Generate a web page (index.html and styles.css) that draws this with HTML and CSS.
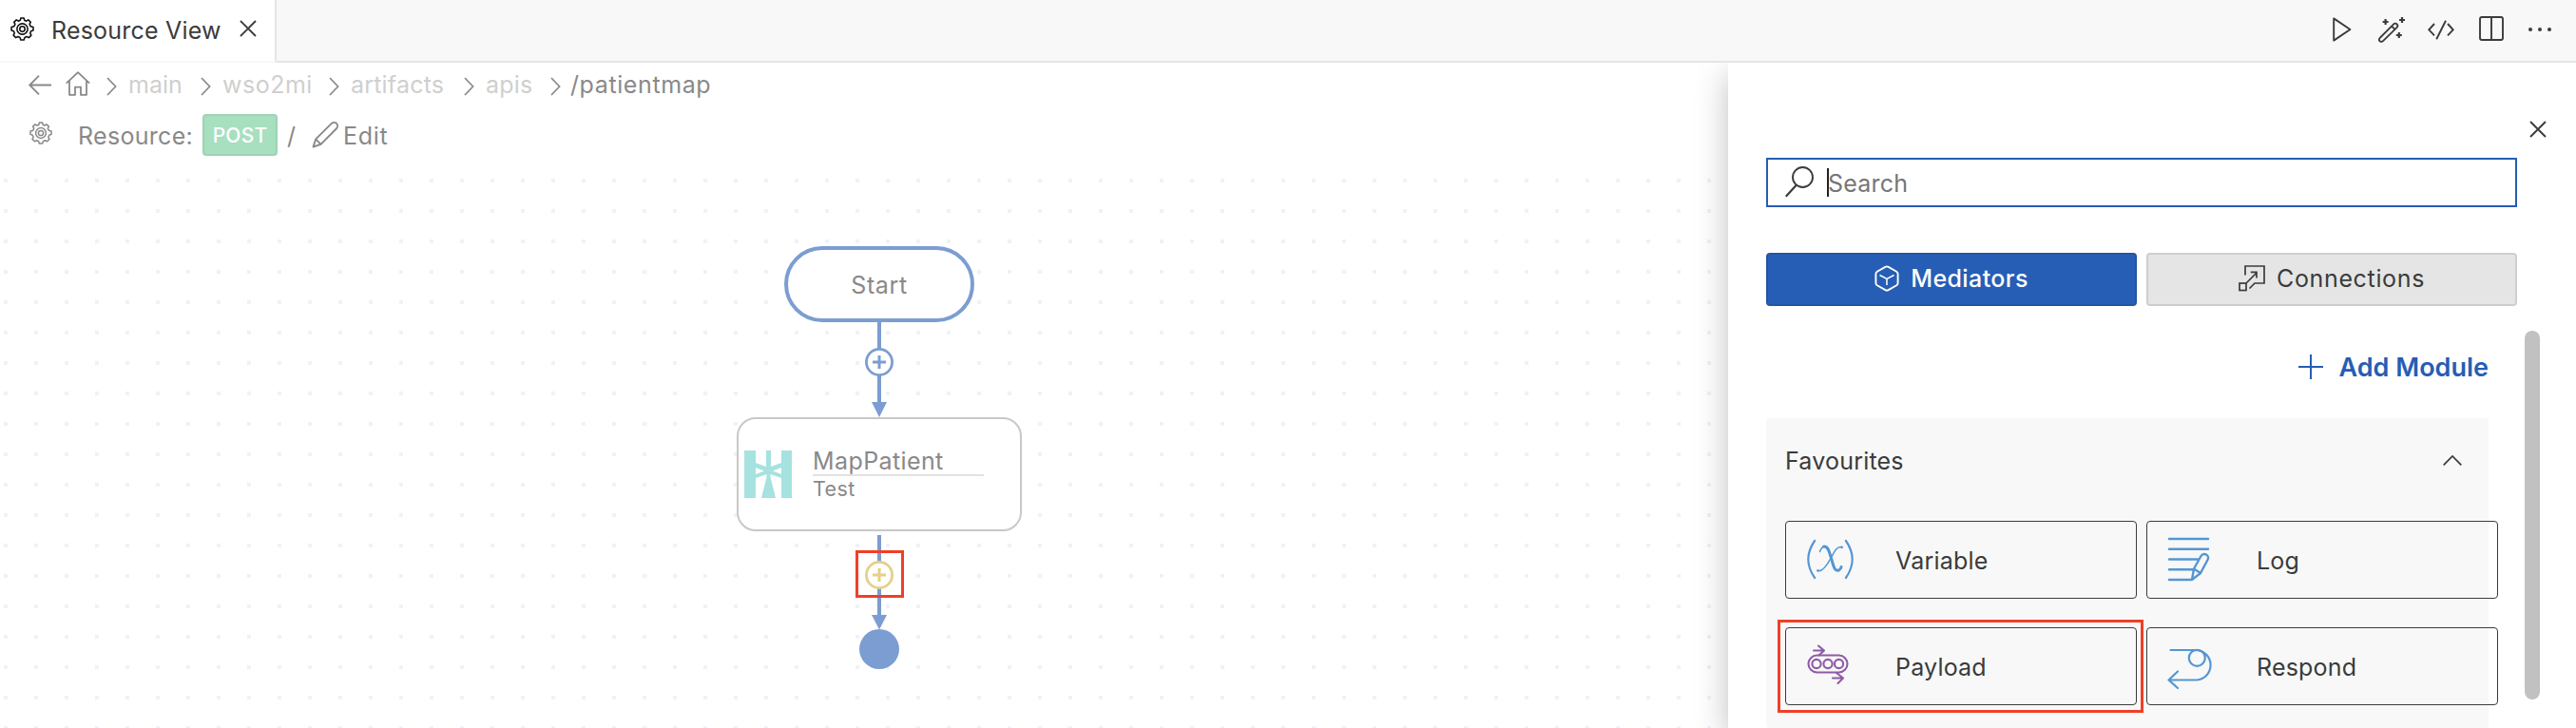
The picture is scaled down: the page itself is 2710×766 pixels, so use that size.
FILE: index.html
```html
<!DOCTYPE html>
<html lang="en">
<head>
<meta charset="utf-8">
<title>Resource View</title>
<link rel="stylesheet" href="styles.css">
</head>
<body>
<svg class="defs" aria-hidden="true">
  <symbol id="gear" viewBox="0 0 24 24">
    <g fill="none" stroke="currentColor" stroke-width="1.5" stroke-linejoin="round">
      <path d="M10.4 1 L13.6 1 L14.1 3.2 L16 4 L18 2.8 L20.4 5.1 L19.3 7.1 L20.3 9.3 L23 10 L23 13.4 L20.7 14.2 L19.9 16.3 L21 18.4 L18.5 20.8 L16.4 19.7 L14.4 20.6 L13.6 23 L10.4 23 L9.6 20.6 L7.6 19.7 L5.5 20.8 L3 18.4 L4.1 16.3 L3.3 14.2 L1 13.4 L1 10 L3.7 9.3 L4.7 7.1 L3.6 5.1 L6 2.8 L8 4 L9.9 3.2 Z"/>
      <circle cx="12" cy="12" r="5.4"/><circle cx="12" cy="12" r="2.6"/>
    </g>
  </symbol>
  <symbol id="crumb" viewBox="0 0 11 20"><path d="M1 1 L9.6 10 L1 19" fill="none" stroke="currentColor" stroke-width="1.7"/></symbol>
  <symbol id="close" viewBox="0 0 18 18"><path d="M1 1 L17 17 M17 1 L1 17" fill="none" stroke="currentColor" stroke-width="1.9"/></symbol>
</svg>

<header class="titlebar">
  <div class="tab">
    <svg class="tab-gear"><use href="#gear"/></svg>
    <span class="t tab-title">Resource View</span>
    <svg class="tab-close"><use href="#close"/></svg>
  </div>
  <div class="actions">
    <svg width="20" height="26" viewBox="0 0 20 26"><path d="M1.2 1.4 L18.4 13 L1.2 24.6 Z" fill="none" stroke="currentColor" stroke-width="1.9" stroke-linejoin="round"/></svg>
    <svg width="28" height="27" viewBox="0 0 28 27" class="wand"><g fill="none" stroke="currentColor" stroke-width="1.8"><path d="M1.6 22 L16.2 7.4 A2.3 2.3 0 0 1 19.6 10.8 L5 25.2 A2.3 2.3 0 0 1 1.6 22 Z M14.2 9.6 L17.4 12.8"/><path stroke-width="2.2" d="M7.6 2 V8 M4.6 5 H10.6 M25 0 V6 M22 3 H28 M21.8 16 V22 M18.8 19 H24.8"/></g></svg>
    <svg width="28" height="21" viewBox="0 0 28 21" class="code"><path d="M7 4 L1.3 10.3 L7 16.4 M21 4 L26.7 10.3 L21 16.4 M19 .8 L9.2 20.2" fill="none" stroke="currentColor" stroke-width="1.9"/></svg>
    <svg width="26" height="26" viewBox="0 0 26 26" class="split"><path d="M3 1 H23 Q25 1 25 3 V23 Q25 25 23 25 H3 Q1 25 1 23 V3 Q1 1 3 1 Z M13 1 V25" fill="none" stroke="currentColor" stroke-width="1.9"/></svg>
    <svg width="24" height="4" viewBox="0 0 24 4" class="more"><g fill="currentColor"><circle cx="2" cy="2" r="2"/><circle cx="12" cy="2" r="2"/><circle cx="22" cy="2" r="2"/></g></svg>
  </div>
</header>

<div class="workspace">
  <main class="editor">
    <nav class="crumbs">
      <svg class="back" viewBox="0 0 24 21"><path d="M24 10.5 H1.5 M11 .7 L1.2 10.5 L11 20.3" fill="none" stroke="currentColor" stroke-width="1.8"/></svg>
      <svg class="home" viewBox="0 0 26 26"><path d="M.8 12.6 L13 1.2 L25.2 12.6 M4 10 V24.8 H10 V16.6 H16 V24.8 H22 V10" fill="none" stroke="currentColor" stroke-width="1.8" stroke-linejoin="round"/></svg>
      <svg class="sep"><use href="#crumb"/></svg><span class="t c-main">main</span>
      <svg class="sep"><use href="#crumb"/></svg><span class="t c-wso">wso2mi</span>
      <svg class="sep"><use href="#crumb"/></svg><span class="t c-art">artifacts</span>
      <svg class="sep"><use href="#crumb"/></svg><span class="t c-apis">apis</span>
      <svg class="sep"><use href="#crumb"/></svg><span class="t c-cur">/patientmap</span>
    </nav>
    <div class="resource">
      <svg class="res-gear"><use href="#gear"/></svg>
      <span class="t res-label">Resource:</span>
      <span class="method"><span class="t">POST</span></span>
      <span class="t slash">/</span>
      <svg class="pencil" viewBox="0 0 28 28"><path d="M1.5 26.5 L4.2 18.4 L20.8 1.9 A3.7 3.7 0 0 1 26 7.2 L9.5 23.8 Z M4.2 18.4 L9.5 23.8" fill="none" stroke="currentColor" stroke-width="1.9" stroke-linejoin="round"/></svg>
      <span class="t edit">Edit</span>
    </div>
    <section class="canvas">
      <svg class="edges" width="320" height="500" viewBox="765 240 320 500">
        <g fill="#7c9dd2">
          <rect x="923" y="338" width="4" height="88"/><path d="M917 423 H933 L925 439 Z"/>
          <rect x="923" y="563" width="4" height="88"/><path d="M917 647 H933 L925 662.5 Z"/>
          <circle cx="925" cy="683" r="21"/>
        </g>
        <g fill="#fff" stroke="#7c9dd2" stroke-width="2.8"><circle cx="925" cy="381" r="13.6"/><path d="M925 374 V388 M918 381 H932" stroke-width="3"/></g>
        <g fill="#fff" stroke="#e5d084" stroke-width="2.8"><circle cx="925" cy="605" r="13.6"/><path d="M925 598 V612 M918 605 H932" stroke-width="3"/></g>
      </svg>
      <div class="start"><span class="t">Start</span></div>
      <div class="node">
        <svg class="node-icon" viewBox="0 0 50 50">
          <rect width="50" height="50" fill="#a6e2df"/>
          <path fill="#fff" d="M12 0 H23 V17 L12 13 Z M28 0 H39 V13 L28 17 Z M12 18 L21 21.5 L12 25 Z M39 18 L30 21.5 L39 25 Z M12 29 L23.5 25 V28 L18 50 H12 Z M39 29 L27.5 25 V28 L33 50 H39 Z"/>
        </svg>
        <div class="node-text">
          <span class="t node-name">MapPatient</span>
          <span class="t node-desc">Test</span>
        </div>
      </div>
      <div class="mark mark-plus"></div>
    </section>
  </main>

  <aside class="drawer">
    <div class="drawer-head"><svg class="drawer-close"><use href="#close"/></svg></div>
    <div class="search">
      <svg class="lens" viewBox="0 0 30 33"><path d="M.8 31.8 L12 19.6" fill="none" stroke="currentColor" stroke-width="2.2"/><circle cx="18.5" cy="11.5" r="10.5" fill="none" stroke="currentColor" stroke-width="1.9"/></svg>
      <span class="caret"></span><span class="t ph">Search</span>
    </div>
    <div class="switch">
      <div class="btn primary">
        <svg width="26" height="28" viewBox="0 0 26 28"><path d="M11.4 1.8 Q13 1 14.6 1.8 L23.2 6.7 Q24.6 7.6 24.6 9.2 V18.8 Q24.6 20.4 23.2 21.3 L14.6 26.2 Q13 27 11.4 26.2 L2.8 21.3 Q1.4 20.4 1.4 18.8 V9.2 Q1.4 7.6 2.8 6.7 Z" fill="none" stroke="#fff" stroke-width="1.9"/><path d="M5.5 10.5 L13 14.3 L20.5 10.5 M13 14.3 V21" fill="none" stroke="#fff" stroke-width="1.5"/></svg>
        <span class="t">Mediators</span>
      </div>
      <div class="btn">
        <svg width="28" height="28" viewBox="0 0 28 28"><g fill="none" stroke="currentColor" stroke-width="1.7"><path d="M7 10.5 V1 H27 V19 H17 L11.5 24.5"/><rect x="1" y="19" width="7" height="7.5"/><path d="M8 19 L19 8 M12.8 7.3 H19 V13.5"/></g></svg>
        <span class="t conn">Connections</span>
      </div>
    </div>
    <div class="add">
      <svg width="26" height="26" viewBox="0 0 26 26"><path d="M13 0 V26 M0 13 H26" stroke="currentColor" stroke-width="2"/></svg>
      <span class="t">Add Module</span>
    </div>
    <div class="card">
      <div class="card-head">
        <span class="t">Favourites</span>
        <svg width="20" height="11" viewBox="0 0 20 11"><path d="M.7 10.3 L10 1 L19.3 10.3" fill="none" stroke="currentColor" stroke-width="1.7"/></svg>
      </div>
      <div class="grid">
        <div class="item">
          <svg class="ic" viewBox="0 0 50 42"><g transform="translate(-.5 -.5)" fill="none" stroke="#5496d3" stroke-linecap="round"><path d="M8.6 1.5 Q-5 21 8.6 40.5 M41.4 1.5 Q55 21 41.4 40.500" stroke-width="2.200"/><path d="M18 7.600 C23 6.500 24 14 26 20 S29 34.500 34 32.500 Q36 31.500 36.600 29" stroke-width="3"/><path d="M14 13 Q15.500 8.500 18.500 7.500 M37.500 8.300 C31.500 6 28 15.500 25.500 20 S17 35.500 11.500 33" stroke-width="1.500"/><circle cx="37" cy="8.300" r=".9"/><circle cx="12" cy="32.800" r=".9"/></g></svg>
          <span class="t">Variable</span>
        </div>
        <div class="item">
          <svg class="ic" viewBox="0 0 50 42"><g transform="translate(-1 -3)" fill="none" stroke="#5496d3" stroke-width="2.400" stroke-linecap="round" stroke-linejoin="round"><path d="M2 2 H43 M2 12.800 H43 M2 23.500 H32 M2 34.300 H27 M2 45 H26 L35 38 L42.500 24 A4 4 0 0 0 35.500 20 L28 33.500 L26 45 M28 33.500 L35 38"/></g></svg>
          <span class="t">Log</span>
        </div>
        <div class="item">
          <svg class="ic" viewBox="0 0 50 42"><g transform="translate(-.5 -1.500)" fill="none" stroke="#8e5ba6" stroke-width="2.100" stroke-linecap="round" stroke-linejoin="round"><rect x="2" y="11" width="41" height="18" rx="9"/><circle cx="10.500" cy="20" r="4.600"/><circle cx="22.500" cy="20" r="4.600"/><circle cx="34" cy="20" r="4.600"/><path d="M7.500 6 H18 M12.500 1 L18.500 6 L13 11 M27.500 35 H38 M31.500 29.500 L38.500 35 L33 40.500"/></g></svg>
          <span class="t">Payload</span>
          <div class="mark mark-item"></div>
        </div>
        <div class="item">
          <svg class="ic" viewBox="0 0 50 42"><g transform="translate(-1 3)" fill="none" stroke="#5496d3" stroke-width="2.200" stroke-linecap="round" stroke-linejoin="round"><path d="M3.500 1 H31 A15.800 15.800 0 0 1 31 32.500 H2 M11 23.500 L1.500 32.500 L11 41"/><circle cx="31.300" cy="9.300" r="8.500"/></g></svg>
          <span class="t">Respond</span>
        </div>
      </div>
    </div>
    <div class="scrollbar"></div>
  </aside>
</div>
</body>
</html>
```

FILE: styles.css
```css
* { box-sizing: border-box; }
body {
  margin: 0;
  width: 2710px;
  height: 766px;
  overflow: hidden;
  display: flex;
  flex-direction: column;
  background: #fff;
  color: #3b3b3b;
  font-family: Inter, "Liberation Sans", sans-serif;
  font-size: 25px;
  letter-spacing: .2px;
}
svg { display: block; flex: none; overflow: visible; }
.defs { position: absolute; width: 0; height: 0; }
.t { line-height: 32px; white-space: nowrap; padding-top: 2px; }

/* Title bar */
.titlebar {
  flex: none;
  height: 66px;
  display: flex;
  justify-content: space-between;
  background: #f8f8f8;
  border-bottom: 2px solid #e5e5e5;
}
.tab {
  width: 291px;
  height: 66px;
  padding: 0 0 4px 11px;
  display: flex;
  align-items: center;
  background: #fff;
  border-right: 2px solid #e5e5e5;
  border-bottom: 2px solid #f8f8f8;
}
.tab-gear { width: 25px; height: 25px; color: #111; }
.tab-title { width: 178px; margin: 1px 20px 0 18px; }
.tab-close { width: 18px; height: 18px; }
.actions { display: flex; align-items: center; padding: 0 26px 2px 0; }
.wand { margin-left: 28px; }
.code { margin-left: 24px; }
.split { margin-left: 26px; margin-top: -2px; }
.more { margin-left: 26px; }

.workspace { flex: 1; display: flex; min-height: 0; }
.editor { width: 1818px; display: flex; flex-direction: column; color: #898989; }

/* Breadcrumb */
.crumbs { height: 46px; display: flex; align-items: center; padding-left: 30px; }
.back { width: 24px; height: 21px; }
.home { width: 26px; height: 26px; margin: -3px 17px 0 15px; }
.sep { width: 11px; height: 20px; margin: 3px 12px 0 0; }
.crumbs .t { color: #cfcfcf; padding-top: 0; }
.c-main { width: 76px; letter-spacing: 0; }
.c-wso { width: 112px; letter-spacing: .5px; }
.c-art { width: 119px; }
.c-apis { width: 68px; }
.crumbs .c-cur { color: #898989; margin-left: -2px; letter-spacing: .6px; }

/* Resource row */
.resource { height: 60px; display: flex; align-items: center; padding-left: 31px; }
.res-gear { width: 24px; height: 24px; margin-top: -4px; }
.res-label { width: 131px; margin-left: 27px; letter-spacing: .3px; }
.method {
  width: 79px;
  height: 44px;
  display: flex;
  align-items: center;
  justify-content: center;
  background: #a8dfbf;
  border: 2px solid #9dd3b3;
  border-radius: 4px;
  color: #fff;
  font-size: 21px;
  font-weight: 500;
}
.slash { margin-left: 10px; width: 26px; }
.pencil { width: 28px; height: 28px; }
.edit { margin-left: 5px; letter-spacing: .7px; }

/* Diagram canvas */
.canvas {
  flex: 1;
  position: relative;
  background-image: conic-gradient(from 90deg at 28px 28px, #eff2f6 25%, transparent 0);
  background-size: 32px 32px;
  background-position: 8px -12px;
}
.edges { position: absolute; left: 765px; top: 68px; }
.start {
  position: absolute;
  left: 825px;
  top: 87px;
  width: 200px;
  height: 80px;
  border: 4px solid #7c9dd2;
  border-radius: 40px;
  background: #fff;
  display: flex;
  align-items: center;
  justify-content: center;
  letter-spacing: .6px;
}
.node {
  position: absolute;
  left: 775px;
  top: 267px;
  width: 300px;
  height: 120px;
  padding-left: 6px;
  border: 2px solid #c8c8c8;
  border-radius: 20px;
  background: #fff;
  display: flex;
  align-items: center;
}
.node-icon { width: 50px; height: 50px; }
.node-text { width: 180px; margin: -4px 0 0 22px; display: flex; flex-direction: column; }
.node-name { border-bottom: 2px solid #e2e2e2; line-height: 27px; padding-top: 4px; letter-spacing: .4px; }
.node-desc { font-size: 21.5px; line-height: 26px; padding-top: 0; letter-spacing: .4px; }
.mark { position: absolute; border: 3px solid #ef4027; }
.mark-plus { left: 900px; top: 407px; width: 51px; height: 50px; }

/* Side drawer */
.drawer {
  position: relative;
  width: 892px;
  padding: 0 62px 0 40px;
  background: #fff;
  box-shadow: 0 12px 32px rgba(0, 0, 0, .25);
  clip-path: inset(0 0 0 -60px);
  display: flex;
  flex-direction: column;
}
.drawer-head { height: 100px; margin-right: -31px; padding-top: 61px; display: flex; justify-content: flex-end; flex: none; }
.drawer-close { width: 18px; height: 18px; }
.search {
  flex: none;
  height: 52px;
  border: 2px solid #265db4;
  display: flex;
  align-items: center;
  padding-left: 18px;
}
.lens { width: 30px; height: 33px; margin-top: -2px; }
.caret { width: 2px; height: 30px; margin-left: 14px; background: #222; }
.ph { color: #767676; margin-left: -1px; }
.switch { display: flex; gap: 10px; margin-top: 48px; flex: none; }
.btn {
  width: 390px;
  height: 56px;
  padding-bottom: 2px;
  display: flex;
  align-items: center;
  justify-content: center;
  gap: 12px;
  border: 2px solid #cecece;
  border-radius: 4px;
  background: #e5e5e5;
}
.btn .t { padding-top: 0; letter-spacing: .4px; }
.btn .conn { letter-spacing: .65px; }
.btn.primary { background: #275eb5; border-color: #2455a3; color: #fff; font-weight: 500; }
.add {
  flex: none;
  margin: 46px 30px 0 0;
  height: 36px;
  display: flex;
  align-items: center;
  justify-content: flex-end;
  gap: 17px;
  color: #265db4;
  font-size: 27px;
  font-weight: 600;
  letter-spacing: 0;
}
.add svg { margin-top: -1px; }
.card { flex: 1; width: 760px; margin-top: 36px; padding: 0 0 0 20px; background: #f8f8f8; border-radius: 4px; }
.card-head { height: 88px; padding-right: 28px; display: flex; align-items: center; justify-content: space-between; }
.grid { display: grid; grid-template-columns: 370px 370px; gap: 30px 10px; margin-top: 20px; }
.item {
  position: relative;
  height: 82px;
  padding-left: 22px;
  display: flex;
  align-items: center;
  border: 1px solid #3b3b3b;
  border-radius: 4px;
}
.ic { width: 50px; height: 42px; margin-right: 43px; }
.mark-item { left: -9px; top: -9px; width: 385px; height: 98px; }
.scrollbar { position: absolute; left: 838px; top: 282px; width: 16px; height: 388px; border-radius: 8px; background: #c1c1c1; }
```
